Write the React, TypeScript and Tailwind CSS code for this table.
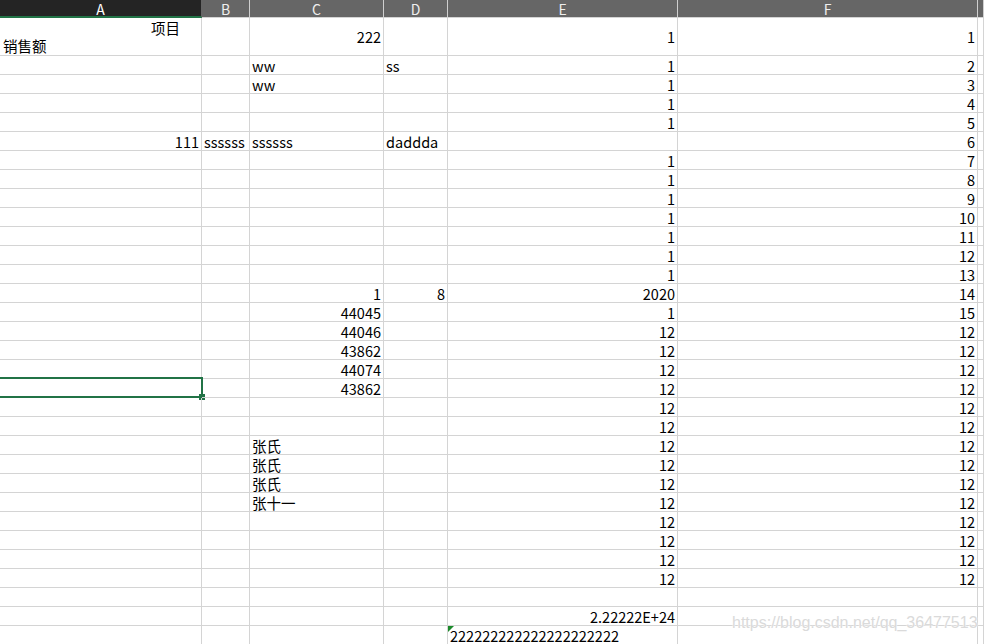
type Val = string | number | undefined;

const COLS = [
  "w-[202px]",
  "w-[48px]",
  "w-[134px]",
  "w-[64px]",
  "w-[230px]",
  "w-[300px]",
  "flex-1",
];

const HEAD = ["A", "B", "C", "D", "E", "F", ""];

const rows: Val[][] = [
  [, , "ww", "ss", 1, 2],
  [, , "ww", , 1, 3],
  [, , , , 1, 4],
  [, , , , 1, 5],
  [111, "ssssss", "ssssss", "daddda", , 6],
  [, , , , 1, 7],
  [, , , , 1, 8],
  [, , , , 1, 9],
  [, , , , 1, 10],
  [, , , , 1, 11],
  [, , , , 1, 12],
  [, , , , 1, 13],
  [, , 1, 8, 2020, 14],
  [, , 44045, , 1, 15],
  [, , 44046, , 12, 12],
  [, , 43862, , 12, 12],
  [, , 44074, , 12, 12],
  [, , 43862, , 12, 12],
  [, , , , 12, 12],
  [, , , , 12, 12],
  [, , "张氏", , 12, 12],
  [, , "张氏", , 12, 12],
  [, , "张氏", , 12, 12],
  [, , "张十一", , 12, 12],
  [, , , , 12, 12],
  [, , , , 12, 12],
  [, , , , 12, 12],
  [, , , , 12, 12],
  [],
  [, , , , "2.22222E+24"],
];

// rows[] index of A19 (the selected cell)
const SELECTED = 17;

function Cell({ col, value, selected }: { col: number; value?: Val; selected?: boolean }) {
  const numeric = typeof value === "number" || value === "2.22222E+24";
  return (
    <div
      className={`${COLS[col]} relative flex h-[19px] shrink-0 whitespace-nowrap border-b border-r border-[#d4d4d4] px-[2px] leading-[20px] ${
        numeric ? "justify-end" : "justify-start"
      }`}
    >
      {value !== undefined && <span>{value}</span>}
      {selected && (
        <div className="absolute -left-[2px] -right-[2px] -top-[2px] -bottom-px border-2 border-[#217346]">
          <div className="absolute -bottom-[4px] -right-[4px] h-[6px] w-[6px] bg-[#217346]" />
        </div>
      )}
    </div>
  );
}

export default function App() {
  return (
    <div className="relative h-[644px] w-[984px] overflow-hidden bg-white font-['Noto_Sans_CJK_SC','Noto_Sans',sans-serif] text-[14.5px] text-black">
      {/* column header */}
      <div className="flex h-[18px]">
        {HEAD.map((h, i) => (
          <div
            key={i}
            className={`${COLS[i]} flex h-[18px] shrink-0 justify-center border-r pt-[2px] text-[14px] leading-[14px] ${
              i === 0
                ? "border-b-2 border-r-[#666666] border-b-[#217346] bg-[#242424] text-white"
                : "border-b border-r-[#cfcfcf] border-b-[#d4d4d4] bg-[#666666] text-[#eeeeee]"
            }`}
          >
            {h}
          </div>
        ))}
      </div>

      {/* row 1 */}
      <div className="flex h-[38px]">
        <div className="flex w-[202px] shrink-0 flex-col border-b border-r border-[#d4d4d4] pt-px leading-[18px]">
          <div className="pr-[21px] text-right">项目</div>
          <div className="pl-[3px]">销售额</div>
        </div>
        <div className="w-[48px] shrink-0 border-b border-r border-[#d4d4d4]" />
        <div className="flex w-[134px] shrink-0 items-center justify-end border-b border-r border-[#d4d4d4] px-[2px] leading-[20px]">
          222
        </div>
        <div className="w-[64px] shrink-0 border-b border-r border-[#d4d4d4]" />
        <div className="flex w-[230px] shrink-0 items-center justify-end border-b border-r border-[#d4d4d4] px-[2px] leading-[20px]">
          1
        </div>
        <div className="flex w-[300px] shrink-0 items-center justify-end border-b border-r border-[#d4d4d4] px-[2px] leading-[20px]">
          1
        </div>
        <div className="flex-1 border-b border-r border-[#d4d4d4]" />
      </div>

      {rows.map((r, ri) => (
        <div key={ri} className="flex h-[19px]">
          {COLS.map((_, ci) => (
            <Cell key={ci} col={ci} value={r[ci]} selected={ri === SELECTED && ci === 0} />
          ))}
        </div>
      ))}

      {/* last row: number stored as text */}
      <div className="flex h-[19px]">
        {COLS.map((_, ci) =>
          ci === 4 ? (
            <div
              key={ci}
              className="relative flex h-[19px] w-[230px] shrink-0 whitespace-nowrap border-b border-r border-[#d4d4d4] px-[2px] leading-[20px]"
            >
              <div className="absolute left-0 top-0 h-0 w-0 border-r-[6px] border-t-[6px] border-r-transparent border-t-[#1b8a2a]" />
              <span>222222222222222222222</span>
            </div>
          ) : (
            <Cell key={ci} col={ci} />
          )
        )}
      </div>

      <div className="pointer-events-none absolute left-[732px] top-[613px] font-['Liberation_Sans',Arial,sans-serif] text-[16px] leading-[20px] text-[#dadada] [text-shadow:0_0_1px_#ffffff,0_0_2px_#ffffff]">
        https://blog.csdn.net/qq_36477513
      </div>
    </div>
  );
}
